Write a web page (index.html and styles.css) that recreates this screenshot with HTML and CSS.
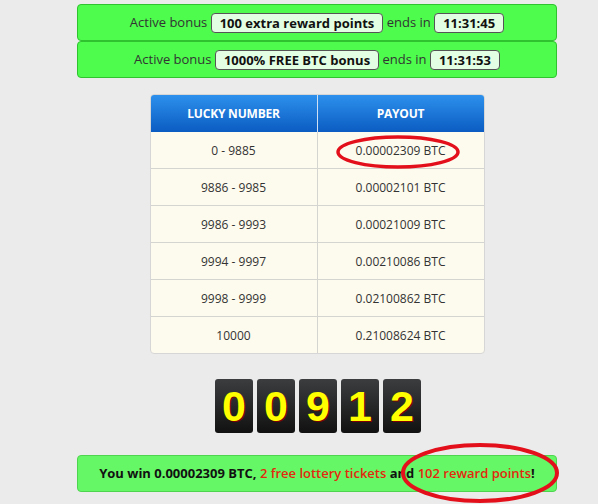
FILE: index.html
```html
<!DOCTYPE html>
<html lang="en">
<head>
    <meta charset="UTF-8">
    <title>Free BTC</title>
    <link rel="stylesheet" href="styles.css">
</head>
<body>
    <div class="container">
        <div class="bonus">
            Active bonus <span class="pill">100 extra reward points</span> ends in <span class="pill">11:31:45</span>
        </div>
        <div class="bonus">
            Active bonus <span class="pill">1000% FREE BTC bonus</span> ends in <span class="pill">11:31:53</span>
        </div>

        <div class="table-wrap">
            <table class="payouts">
                <thead>
                    <tr><th>Lucky Number</th><th>Payout</th></tr>
                </thead>
                <tbody>
                    <tr><td>0 - 9885</td><td>0.00002309 BTC</td></tr>
                    <tr><td>9886 - 9985</td><td>0.00002101 BTC</td></tr>
                    <tr><td>9986 - 9993</td><td>0.00021009 BTC</td></tr>
                    <tr><td>9994 - 9997</td><td>0.00210086 BTC</td></tr>
                    <tr><td>9998 - 9999</td><td>0.02100862 BTC</td></tr>
                    <tr><td>10000</td><td>0.21008624 BTC</td></tr>
                </tbody>
            </table>
        </div>

        <div class="digits">
            <span class="digit">0</span>
            <span class="digit">0</span>
            <span class="digit">9</span>
            <span class="digit">1</span>
            <span class="digit">2</span>
        </div>

        <div class="result">
            You win 0.00002309 BTC, <span class="red">2 free lottery tickets</span> and <span class="red">102 reward points</span>!
        </div>
    </div>

    <!-- hand-drawn marks on the screenshot -->
    <svg class="mark mark-payout" width="130" height="40" viewBox="0 0 130 40">
        <ellipse cx="64" cy="19" rx="60" ry="15" fill="none" stroke="#e3101b" stroke-width="3.5"/>
    </svg>
    <svg class="mark mark-points" width="170" height="66" viewBox="0 0 170 66">
        <ellipse cx="84" cy="32" rx="77" ry="28" fill="none" stroke="#e3101b" stroke-width="4"/>
    </svg>
</body>
</html>
```

FILE: styles.css
```css
body {
    margin: 0;
    background-color: #ebebeb;
    font-family: 'Open Sans', 'Noto Sans', sans-serif;
    font-size: 13px;
    color: #222;
    position: relative;
    height: 504px;
    overflow: hidden;
}
.container {
    width: 480px;
    margin-left: 77px;
    padding-top: 4px;
}
.bonus {
    box-sizing: border-box;
    height: 37px;
    line-height: 35px;
    text-align: center;
    background-color: #4dfc4d;
    border: 1px solid #2fc42f;
    border-radius: 4px;
    color: #333;
    white-space: nowrap;
}
.pill {
    display: inline-block;
    vertical-align: middle;
    background-color: #e3ffe3;
    border: 1px solid #555;
    border-radius: 4px;
    padding: 0 8px;
    line-height: 18px;
    font-weight: 700;
    color: #111;
    position: relative;
    top: -1px;
}
.table-wrap {
    width: 333px;
    margin: 16px auto 0;
    border: 1px solid #d6d6d6;
    border-radius: 4px;
    overflow: hidden;
    background-color: #fdfbee;
}
.payouts {
    width: 100%;
    border-collapse: collapse;
    table-layout: fixed;
    font-size: 12px;
}
.payouts th {
    height: 37px;
    padding: 0;
    background: linear-gradient(#2d90ec, #0b5cc2);
    color: #fff;
    font-weight: 700;
    text-transform: uppercase;
    letter-spacing: -0.2px;
}
.payouts th + th {
    border-left: 1px solid #cfe0f5;
}
.payouts td {
    height: 36px;
    padding: 0;
    text-align: center;
    color: #333;
    border-top: 1px solid #d4d4d0;
}
.payouts td + td {
    border-left: 1px solid #d4d4d0;
}
.payouts tbody tr:first-child td {
    border-top: none;
}
.digits {
    display: flex;
    justify-content: center;
    gap: 4px;
    margin-top: 25px;
    padding-left: 2px;
}
.digit {
    width: 38px;
    height: 54px;
    border-radius: 3px;
    background: linear-gradient(#3c3d3f, #111);
    color: #ffff00;
    font-family: 'Liberation Sans', Arial, sans-serif;
    font-weight: 700;
    font-size: 43px;
    line-height: 54px;
    text-align: center;
    text-shadow: 1px 1px 0 #7a0000;
}
.result {
    box-sizing: border-box;
    height: 37px;
    margin-top: 22px;
    line-height: 35px;
    text-align: center;
    background-color: #66f766;
    border: 1px solid #4fd44f;
    border-radius: 4px;
    font-weight: 700;
    color: #111;
    white-space: nowrap;
}
.red {
    color: #e2280e;
    font-weight: 600;
}
.mark {
    position: absolute;
}
.mark-payout {
    left: 334px;
    top: 133px;
}
.mark-points {
    left: 396px;
    top: 441px;
}
```
